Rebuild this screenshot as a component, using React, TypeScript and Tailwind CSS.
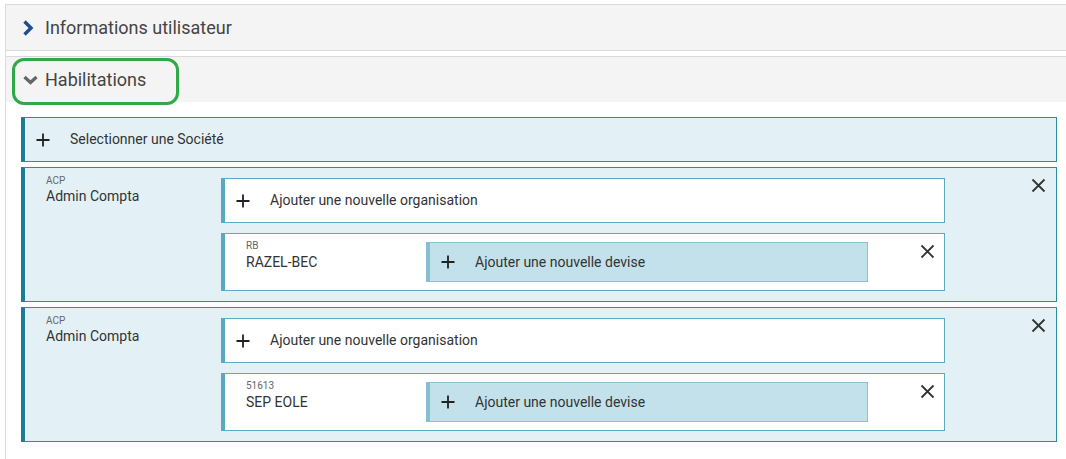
import React from "react";

const Plus = () => (
  <svg width="14" height="14" viewBox="0 0 14 14" className="shrink-0">
    <path d="M7 0.5V13.5M0.5 7H13.5" stroke="#222" strokeWidth="1.8" />
  </svg>
);

const Close = () => (
  <svg width="15" height="15" viewBox="0 0 15 15" className="shrink-0">
    <path d="M1.5 1.5L13.5 13.5M13.5 1.5L1.5 13.5" stroke="#333" strokeWidth="1.8" />
  </svg>
);

function Org({ code, name }: { code: string; name: string }) {
  return (
    <div className="relative flex h-[58px] w-[724px] border border-[#5fa9bf] border-l-[4px] border-l-[#5aa9c2] bg-white">
      <div className="w-[201px] pl-[21px] pt-[6px]">
        <div className="text-[10px] leading-[12px] text-[#666]">{code}</div>
        <div className="mt-[2px] text-[14px] leading-[16px] text-[#333]">{name}</div>
      </div>
      <div className="mt-[8px] flex h-[40px] w-[442px] items-center border border-[#8cc3d4] border-l-[4px] border-l-[#86bed1] bg-[#c2e1eb] pl-[11px]">
        <Plus />
        <span className="ml-[20px] text-[14px] text-[#333]">Ajouter une nouvelle devise</span>
      </div>
      <div className="absolute right-[9px] top-[10px]">
        <Close />
      </div>
    </div>
  );
}

function Societe({ code, name }: { code: string; name: string }) {
  return (
    <div className="relative flex h-[135px] border border-[#2a8ea3] border-l-[4px] border-l-[#1a7d95] bg-[#e3f1f6]">
      <div className="w-[196px] pl-[21px] pt-[7px]">
        <div className="text-[10px] leading-[12px] text-[#666]">ACP</div>
        <div className="mt-[1px] text-[14px] leading-[16px] text-[#333]">Admin Compta</div>
      </div>
      <div className="flex flex-col gap-[10px] pt-[10px]">
        <div className="flex h-[45px] w-[724px] items-center border border-[#5fa9bf] border-l-[4px] border-l-[#5aa9c2] bg-white pl-[11px]">
          <Plus />
          <span className="ml-[20px] text-[14px] text-[#333]">Ajouter une nouvelle organisation</span>
        </div>
        <Org code={code} name={name} />
      </div>
      <div className="absolute right-[10px] top-[10px]">
        <Close />
      </div>
    </div>
  );
}

export default function App() {
  return (
    <div
      className="relative h-[459px] w-[1066px] overflow-hidden bg-white pt-[4px]"
      style={{ fontFamily: "Roboto, 'Liberation Sans', sans-serif" }}
    >
      <div className="ml-[5px] h-[455px] border-l border-[#dcdcdc]">
        <div className="flex h-[47px] items-center border-y border-[#d9d9d9] bg-[#f4f4f4] pl-[16px]">
          <svg width="12" height="16" viewBox="0 0 12 16">
            <path d="M2.5 1.5L9 8L2.5 14.5" stroke="#1d4f8e" strokeWidth="3.4" fill="none" />
          </svg>
          <span className="ml-[11px] text-[18px] text-[#444]">Informations utilisateur</span>
        </div>
        <div className="mt-[5px] flex h-[46px] items-center border-t border-[#d9d9d9] bg-[#f4f4f4] pl-[17px]">
          <svg width="15" height="10" viewBox="0 0 15 10">
            <path d="M1.5 2L7.5 7.5L13.5 2" stroke="#666" strokeWidth="3.2" fill="none" />
          </svg>
          <span className="ml-[7px] text-[18px] text-[#444]">Habilitations</span>
        </div>
        <div className="flex flex-col gap-[5px] pl-[15px] pr-[9px] pt-[15px]">
          <div className="flex h-[45px] items-center border border-[#2a8ea3] border-l-[4px] border-l-[#1a7d95] bg-[#e3f1f6] pl-[11px]">
            <Plus />
            <span className="ml-[20px] text-[14px] text-[#333]">Selectionner une Société</span>
          </div>
          <Societe code="RB" name="RAZEL-BEC" />
          <Societe code="51613" name="SEP EOLE" />
        </div>
      </div>
      <div className="absolute left-[12px] top-[58px] h-[47px] w-[167px] rounded-[12px] border-[3px] border-[#2faa46]" />
    </div>
  );
}
